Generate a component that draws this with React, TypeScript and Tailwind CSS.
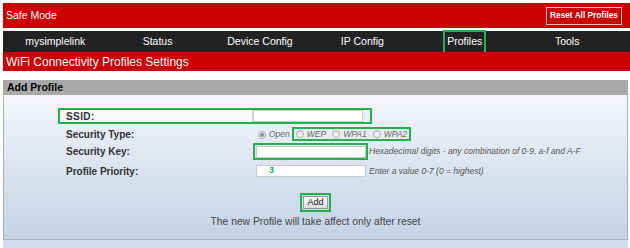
import React from "react";

const navItems = ["mysimplelink", "Status", "Device Config", "IP Config", "Profiles", "Tools"];

function Radio({ checked = false }: { checked?: boolean }) {
  return (
    <span className="inline-flex h-[8px] w-[8px] items-center justify-center rounded-full border border-[#a9a9a9] bg-gradient-to-b from-[#e4e4e4] to-[#fafafa]">
      {checked ? <span className="h-[4px] w-[4px] rounded-full bg-[#8a8a8a]" /> : null}
    </span>
  );
}

export default function App() {
  return (
    <div
      className="flex h-[248px] w-[630px] flex-col overflow-hidden bg-white pl-[3px] pt-[3px]"
      style={{ fontFamily: '"Liberation Sans", Arial, sans-serif' }}
    >
      {/* top bar */}
      <div className="flex h-[26px] items-center justify-between bg-[#cc0000] pl-[3px] pr-[8px]">
        <span className="text-[10.5px] text-white">Safe Mode</span>
        <button className="flex h-[18px] w-[76px] items-center justify-center border border-[#f2bcbc] text-[8.3px] font-bold text-white">
          Reset All Profiles
        </button>
      </div>

      {/* nav */}
      <nav className="mt-[3px] flex h-[21px] items-center bg-[#222222] pl-[1px]">
        {navItems.map((item) => (
          <div key={item} className="flex w-[102.4px] items-center justify-center text-[10.5px] text-white">
            {item === "Profiles" ? (
              <span className="flex h-[24px] items-center border-2 border-[#22b14c] px-[2px]">{item}</span>
            ) : (
              item
            )}
          </div>
        ))}
      </nav>

      {/* page title */}
      <div className="flex h-[19px] items-center bg-[#cc0000] pl-[3px] text-[12px] text-white">
        WiFi Connectivity Profiles Settings
      </div>

      {/* panel */}
      <div className="mt-[9px] mr-[2px] flex flex-col">
        <div className="flex h-[15px] items-center bg-[#a9a9a9] pl-[4px] text-[10.5px] font-bold text-black">
          Add Profile
        </div>
        <div className="flex h-[145px] flex-col border-x border-b border-[#a7b1be] bg-gradient-to-b from-[#f5f6f9] to-[#c3d3e6] pt-[13px] text-[10px] font-bold text-[#333]">
          {/* SSID */}
          <div className="ml-[54px] flex h-[16px] w-[314px] items-center border-2 border-[#22b14c]">
            <div className="flex h-full w-[193px] items-center border-r border-[#d4d8de] bg-[#f7f8fa] pl-[6px] tracking-[0.4px]">
              SSID:
            </div>
            <div className="h-[12px] w-[110px] border border-[#c9c9c9] bg-white" />
          </div>

          {/* Security type */}
          <div className="mt-[2px] ml-[56px] flex h-[16px] items-center">
            <div className="w-[196px] pl-[6px]">Security Type:</div>
            <div className="flex items-center text-[8.5px] font-normal italic text-[#666]">
              <span className="ml-[2px]">
                <Radio checked />
              </span>
              <span className="ml-[3px]">Open</span>
              <span className="ml-[2px] flex h-[14px] items-center gap-[3px] border-2 border-[#22b14c] pl-[2px] pr-[2px]">
                <Radio />
                <span className="mr-[3px]">WEP</span>
                <Radio />
                <span className="mr-[3px]">WPA1</span>
                <Radio />
                <span>WPA2</span>
              </span>
            </div>
          </div>

          {/* Security key */}
          <div className="mt-[1px] ml-[56px] flex h-[17px] items-center">
            <div className="w-[196px] pl-[6px]">Security Key:</div>
            <div className="-ml-[3px] flex h-[17px] w-[115px] items-center border-2 border-[#22b14c] pl-[1px]">
              <div className="h-[12px] w-[110px] border border-[#c9c9c9] bg-white" />
            </div>
            <span className="ml-[1px] text-[8.5px] font-normal italic text-[#555]">
              Hexadecimal digits - any combination of 0-9, a-f and A-F
            </span>
          </div>

          {/* Priority */}
          <div className="mt-[3px] ml-[56px] flex h-[16px] items-center">
            <div className="w-[196px] pl-[6px]">Profile Priority:</div>
            <div className="flex h-[12px] w-[110px] items-center border border-[#c9c9c9] bg-white pl-[12px] text-[9px] text-[#22b14c]">
              3
            </div>
            <span className="ml-[3px] text-[8.5px] font-normal italic text-[#555]">
              Enter a value 0-7 (0 = highest)
            </span>
          </div>

          {/* Add */}
          <div className="mt-[14px] flex justify-center">
            <div className="flex h-[19px] w-[31px] items-center justify-center border-2 border-[#22b14c]">
              <button className="flex h-[13px] w-[25px] items-center justify-center border border-[#9a9a9a] bg-gradient-to-b from-[#fbfbfb] to-[#dcdcdc] text-[9px] font-normal text-[#222]">
                Add
              </button>
            </div>
          </div>
          <div className="mt-[2px] text-center text-[10.3px] font-normal text-[#444]">
            The new Profile will take affect only after reset
          </div>
        </div>
        <div className="h-[8px] bg-[#d0dcec]" />
      </div>
    </div>
  );
}
